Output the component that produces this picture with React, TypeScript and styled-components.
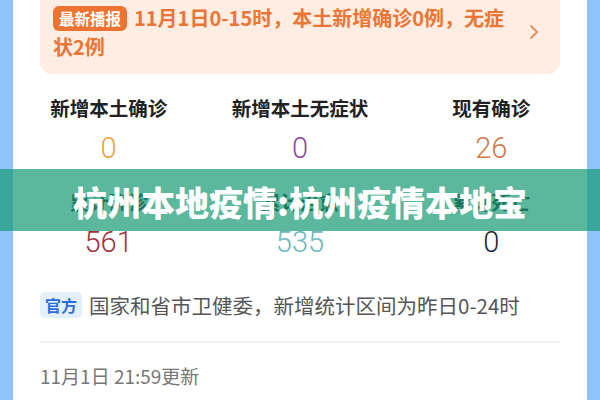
import React from "react";
import styled, { createGlobalStyle } from "styled-components";
import { ChevronRight } from "lucide-react";

const GlobalStyle = createGlobalStyle`
  html, body {
    margin: 0;
    padding: 0;
    background: #8ec4fb;
    font-family: "Noto Sans CJK SC", "Noto Sans", sans-serif;
  }
`;

const Page = styled.div`
  position: relative;
  width: 600px;
  height: 400px;
  overflow: hidden;
  padding: 0 13px;
  box-sizing: border-box;
`;

const Card = styled.div`
  background: #fff;
  height: 100%;
  display: flex;
  flex-direction: column;
`;

const Notice = styled.div`
  margin: 0 27px;
  background: #fdede3;
  border-radius: 0 0 12px 12px;
  padding: 3px 14px 13px 13px;
  display: flex;
  align-items: center;
  gap: 16px;
`;

const NoticeText = styled.div`
  flex: 1;
  color: #ea7535;
  font-size: 20px;
  font-weight: 700;
  line-height: 29px;
`;

const HotTag = styled.span`
  display: inline-block;
  background: #ec7331;
  color: #fff;
  font-size: 15.5px;
  line-height: 25px;
  padding: 0 6px;
  border-radius: 6px;
  margin-right: 7px;
  vertical-align: 1px;
`;

const Stats = styled.div`
  margin-top: 20px;
  display: grid;
  grid-template-columns: repeat(3, 1fr);
  row-gap: 22px;
`;

const Stat = styled.div`
  display: flex;
  flex-direction: column;
  align-items: center;
  gap: 8px;
`;

const StatLabel = styled.div`
  color: #222;
  font-size: 19.5px;
  font-weight: 700;
  line-height: 28px;
`;

const StatValue = styled.div<{ $color: string }>`
  color: ${({ $color }) => $color};
  font-family: Roboto, "Noto Sans", sans-serif;
  font-weight: 300;
  font-size: 29px;
  line-height: 36px;
`;

const Source = styled.div`
  margin: 32px 27px 0;
  display: flex;
  align-items: center;
  gap: 7px;
`;

const SourceTag = styled.span`
  background: #e4effc;
  color: #2b6fd8;
  font-size: 16px;
  font-weight: 700;
  line-height: 26px;
  padding: 0 5px;
  border-radius: 5px;
`;

const SourceText = styled.span`
  color: #555;
  font-size: 20.5px;
  line-height: 26px;
`;

const Divider = styled.hr`
  margin: 23px 27px 0;
  border: none;
  border-top: 2px solid #f2f2f2;
`;

const Updated = styled.div`
  margin: 21px 27px 0;
  color: #777;
  font-size: 19px;
  line-height: 24px;
`;

const Banner = styled.div`
  position: absolute;
  left: 0;
  right: 0;
  top: 169px;
  height: 62px;
  background: rgba(22, 154, 116, 0.7);
  display: flex;
  align-items: center;
  justify-content: center;
`;

const BannerTitle = styled.h1`
  margin: 0;
  color: #fff;
  font-size: 34px;
  font-weight: 900;
  line-height: 1;
  padding-top: 3px;
`;

const stats = [
  { label: "新增本土确诊", value: "0", color: "#e9a445" },
  { label: "新增本土无症状", value: "0", color: "#8b4a9e" },
  { label: "现有确诊", value: "26", color: "#d0784a" },
  { label: "累计确诊", value: "561", color: "#a1323c" },
  { label: "累计治愈", value: "535", color: "#6bb8bd" },
  { label: "累计死亡", value: "0", color: "#1f2a3a" },
];

export default function App() {
  return (
    <>
      <GlobalStyle />
      <Page>
        <Card>
          <Notice>
            <NoticeText>
              <HotTag>最新播报</HotTag>
              11月1日0-15时，本土新增确诊0例，无症状2例
            </NoticeText>
            <ChevronRight size={24} color="#e57c3e" strokeWidth={1.7} />
          </Notice>

          <Stats>
            {stats.map((s) => (
              <Stat key={s.label}>
                <StatLabel>{s.label}</StatLabel>
                <StatValue $color={s.color}>{s.value}</StatValue>
              </Stat>
            ))}
          </Stats>

          <Source>
            <SourceTag>官方</SourceTag>
            <SourceText>国家和省市卫健委，新增统计区间为昨日0-24时</SourceText>
          </Source>

          <Divider />

          <Updated>11月1日 21:59更新</Updated>
        </Card>

        <Banner>
          <BannerTitle>杭州本地疫情:杭州疫情本地宝</BannerTitle>
        </Banner>
      </Page>
    </>
  );
}
